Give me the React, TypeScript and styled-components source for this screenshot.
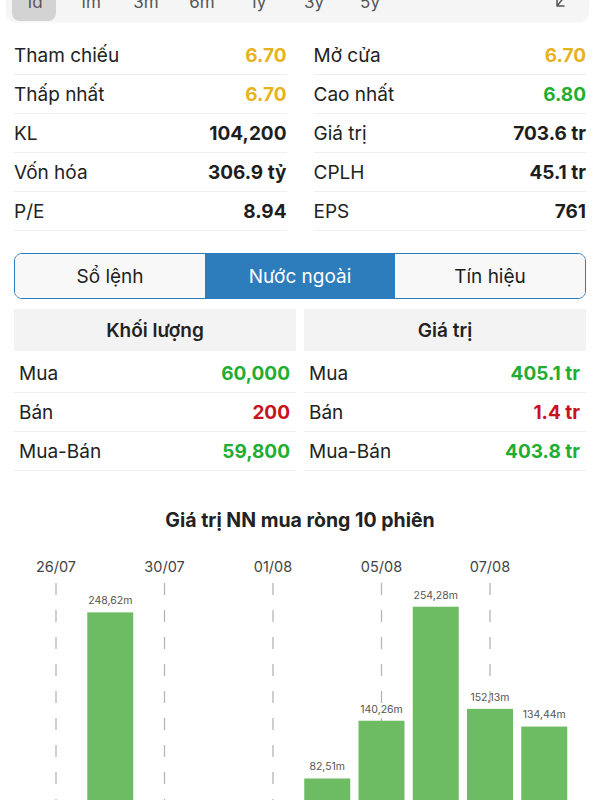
import styled, { createGlobalStyle } from "styled-components";

const GlobalStyle = createGlobalStyle`
  html, body {
    margin: 0;
    padding: 0;
    background: #ffffff;
    overflow: hidden;
  }
  body {
    font-family: "Inter", "Noto Sans", sans-serif;
    color: #222222;
  }
`;

type Tone = "plain" | "ref" | "up" | "down";

const toneColor: Record<Tone, string> = {
  plain: "#1e1e1e",
  ref: "#e8b21c",
  up: "#1fae33",
  down: "#c8121f",
};

const ranges = ["1d", "1m", "3m", "6m", "1y", "3y", "5y"];

const stats: [string, string, Tone, string, string, Tone][] = [
  ["Tham chiếu", "6.70", "ref", "Mở cửa", "6.70", "ref"],
  ["Thấp nhất", "6.70", "ref", "Cao nhất", "6.80", "up"],
  ["KL", "104,200", "plain", "Giá trị", "703.6 tr", "plain"],
  ["Vốn hóa", "306.9 tỷ", "plain", "CPLH", "45.1 tr", "plain"],
  ["P/E", "8.94", "plain", "EPS", "761", "plain"],
];

const volume: [string, string, Tone][] = [
  ["Mua", "60,000", "up"],
  ["Bán", "200", "down"],
  ["Mua-Bán", "59,800", "up"],
];

const value: [string, string, Tone][] = [
  ["Mua", "405.1 tr", "up"],
  ["Bán", "1.4 tr", "down"],
  ["Mua-Bán", "403.8 tr", "up"],
];

// 10 sessions, only positive ones drawn
const sessions: { date: string; value: number }[] = [
  { date: "26/07", value: 0 },
  { date: "29/07", value: 248.62 },
  { date: "30/07", value: 0 },
  { date: "31/07", value: 0 },
  { date: "01/08", value: 0 },
  { date: "02/08", value: 82.51 },
  { date: "05/08", value: 140.26 },
  { date: "06/08", value: 254.28 },
  { date: "07/08", value: 152.13 },
  { date: "08/08", value: 134.44 },
];

function Chart() {
  const step = 54.25;
  const first = 56;
  const base = 311;
  const barW = 46;
  return (
    <ChartSvg width={600} height={260} viewBox="0 0 600 260">
      {sessions.map((s, i) =>
        i % 2 === 0 ? (
          <g key={"g" + i}>
            <text
              x={first + step * i}
              y={18}
              textAnchor="middle"
              dominantBaseline="middle"
              fontSize="14.5"
              fill="#444"
            >
              {s.date}
            </text>
            <line
              x1={first + step * i}
              x2={first + step * i}
              y1={33}
              y2={260}
              stroke="#b5b5b5"
              strokeWidth={1.3}
              strokeDasharray="12 15"
            />
          </g>
        ) : null
      )}
      {sessions.map((s, i) =>
        s.value > 0 ? (
          <g key={"b" + i}>
            <rect
              x={first + step * i - barW / 2}
              y={base - s.value}
              width={barW}
              height={s.value}
              fill="#6dbc64"
            />
            <text
              x={first + step * i}
              y={base - s.value - 11}
              textAnchor="middle"
              dominantBaseline="middle"
              fontSize="10.5"
              fill="#555"
            >
              {s.value.toFixed(2).replace(".", ",")}m
            </text>
          </g>
        ) : null
      )}
    </ChartSvg>
  );
}

export default function App() {
  return (
    <Page>
      <GlobalStyle />
      <RangeBar>
        {ranges.map((r, i) => (
          <RangeItem key={r}>
            <RangePill $active={i === 0}>{r}</RangePill>
          </RangeItem>
        ))}
        <Spacer />
        <svg width="16" height="20" viewBox="0 0 16 20">
          <path
            d="M14 -2 L2 13 M2 6 L2 13 L9 13"
            fill="none"
            stroke="#555"
            strokeWidth="1.5"
            strokeLinecap="round"
            strokeLinejoin="round"
          />
        </svg>
      </RangeBar>

      <StatGrid>
        {stats.map((s) => (
          <>
            <StatRow key={s[0]}>
              <Label>{s[0]}</Label>
              <Value $tone={s[2]}>{s[1]}</Value>
            </StatRow>
            <StatRow key={s[3]}>
              <Label>{s[3]}</Label>
              <Value $tone={s[5]}>{s[4]}</Value>
            </StatRow>
          </>
        ))}
      </StatGrid>

      <Segments>
        <Segment>Sổ lệnh</Segment>
        <Segment $active>Nước ngoài</Segment>
        <Segment>Tín hiệu</Segment>
      </Segments>

      <Tables>
        <Table>
          <TableHead>Khối lượng</TableHead>
          {volume.map((r) => (
            <TableRow key={r[0]}>
              <Label>{r[0]}</Label>
              <Value $tone={r[2]}>{r[1]}</Value>
            </TableRow>
          ))}
        </Table>
        <Table>
          <TableHead>Giá trị</TableHead>
          {value.map((r) => (
            <TableRow key={r[0]}>
              <Label>{r[0]}</Label>
              <Value $tone={r[2]}>{r[1]}</Value>
            </TableRow>
          ))}
        </Table>
      </Tables>

      <ChartTitle>Giá trị NN mua ròng 10 phiên</ChartTitle>
      <Chart />
    </Page>
  );
}

const Page = styled.div`
  width: 600px;
  height: 800px;
  overflow: hidden;
`;

const RangeBar = styled.div`
  display: flex;
  align-items: center;
  height: 38px;
  margin: -16px 11px 0 6px;
  padding-right: 18px;
  background: #f5f5f5;
  border-radius: 0 0 10px 10px;
  box-shadow: 0 1px 2px rgba(0, 0, 0, 0.03);
`;

const RangeItem = styled.div`
  width: 56px;
  height: 100%;
  display: flex;
  justify-content: center;
  padding: 0 6px 1px;
  box-sizing: border-box;
`;

const RangePill = styled.div<{ $active?: boolean }>`
  flex: 1;
  display: flex;
  align-items: center;
  justify-content: center;
  padding-bottom: 1px;
  border-radius: 0 0 8px 8px;
  background: ${(p) => (p.$active ? "#d3d3d3" : "transparent")};
  font-size: 17px;
  color: #555;
`;

const Spacer = styled.div`
  flex: 1;
`;

const StatGrid = styled.div`
  display: grid;
  grid-template-columns: 1fr 1fr;
  column-gap: 27px;
  padding: 0 14px;
  margin-top: 14px;
`;

const StatRow = styled.div`
  display: flex;
  align-items: center;
  justify-content: space-between;
  height: 38px;
  border-bottom: 1px solid #eeeeee;
`;

const Label = styled.span`
  font-size: 19px;
  color: #222;
`;

const Value = styled.span<{ $tone: Tone }>`
  font-size: 19px;
  font-weight: 700;
  color: ${(p) => toneColor[p.$tone]};
`;

const Segments = styled.div`
  display: grid;
  grid-template-columns: 1fr 1fr 1fr;
  margin: 22px 14px 0;
  height: 46px;
  border: 1.5px solid #2d7cbc;
  border-radius: 8px;
  overflow: hidden;
  box-sizing: border-box;
`;

const Segment = styled.div<{ $active?: boolean }>`
  display: flex;
  align-items: center;
  justify-content: center;
  font-size: 19px;
  color: ${(p) => (p.$active ? "#ffffff" : "#1e1e1e")};
  background: ${(p) => (p.$active ? "#2d7cbc" : "#f8f8f8")};
`;

const Tables = styled.div`
  display: grid;
  grid-template-columns: 1fr 1fr;
  column-gap: 8px;
  padding: 0 14px;
  margin-top: 10px;
`;

const Table = styled.div`
  display: flex;
  flex-direction: column;
`;

const TableHead = styled.div`
  height: 42px;
  display: flex;
  align-items: center;
  justify-content: center;
  background: #f3f3f3;
  font-size: 19px;
  font-weight: 600;
  color: #222;
  margin-bottom: 3px;
`;

const TableRow = styled.div`
  display: flex;
  align-items: center;
  justify-content: space-between;
  height: 38px;
  padding: 0 6px 0 5px;
  border-bottom: 1px solid #eeeeee;
`;

const ChartTitle = styled.div`
  margin-top: 36px;
  text-align: center;
  font-size: 19.5px;
  line-height: 26px;
  font-weight: 700;
  color: #222;
`;

const ChartSvg = styled.svg`
  display: block;
  margin-top: 17px;
  font-family: "Inter", "Noto Sans", sans-serif;
`;
